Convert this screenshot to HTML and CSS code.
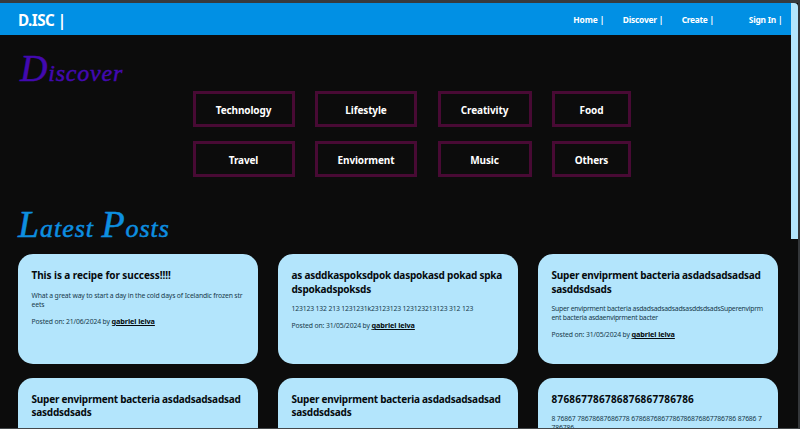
FILE: index.html
```html
<!DOCTYPE html>
<html lang="en">
<head>
<meta charset="utf-8">
<title>D.ISC</title>
<link rel="stylesheet" href="styles.css">
</head>
<body>
<div class="window">
  <div class="page">
    <header class="navbar">
      <a class="brand">D.ISC |</a>
      <nav class="links"><a class="home">Home |</a><a class="disc">Discover |</a><a class="create">Create |</a><a class="sign">Sign In |</a></nav>
    </header>
    <main>
      <h1 class="script discover"><span class="cap">D</span>iscover</h1>
      <section class="topics">
        <a>Technology</a><a>Lifestyle</a><a>Creativity</a><a>Food</a>
        <a>Travel</a><a>Enviorment</a><a>Music</a><a>Others</a>
      </section>
      <h1 class="script latest"><span class="cap">L</span>atest <span class="cap">P</span>osts</h1>
      <section class="posts">
        <article><h2 class="short">This is a recipe for success!!!!</h2><p>What a great way to start a day in the cold days of Icelandic frozen str<br>eets</p><p class="meta">Posted on: 21/06/2024 by <b>gabriel leiva</b></p></article>
        <article><h2>as asddkaspoksdpok daspokasd pokad spka<br>dspokadspoksds</h2><p>123123 132 213 1231231k23123123 123123213123 312 123</p><p class="meta">Posted on: 31/05/2024 by <b>gabriel leiva</b></p></article>
        <article><h2>Super enviprment bacteria asdadsadsadsad<br>sasddsdsads</h2><p class="dense">Super enviprment bacteria asdadsadsadsadsasddsdsadsSuperenviprm<br>ent bacteria asdaenviprment bacter</p><p class="meta">Posted on: 31/05/2024 by <b>gabriel leiva</b></p></article>
        <article><h2>Super enviprment bacteria asdadsadsadsad<br>sasddsdsads</h2></article>
        <article><h2>Super enviprment bacteria asdadsadsadsad<br>sasddsdsads</h2></article>
        <article><h2 class="number">876867786786876867786786</h2><p>8 76867 78678687686778 6786876867786786876867786786 87686 7<br>786786</p></article>
      </section>
    </main>
  </div>
  <div class="scrollbar"><div class="thumb"></div></div>
</div>
</body>
</html>
```
FILE: styles.css
```css
* { box-sizing: border-box; }
body { margin: 0; background: #0c0c0c; font-family: "Noto Sans", "Open Sans", sans-serif; color: #fff; overflow: hidden; }
.window { display: flex; height: 429px; border-top: 3px solid #373a3d; border-right: 2px solid #34373a; border-bottom: 1px solid #43474a; overflow: hidden; }
.page { width: 791px; flex: none; overflow: hidden; }
.scrollbar { width: 7px; flex: none; background: #0c0c0c; }
.thumb { height: 236px; background: #b3e5fc; border-top-right-radius: 4px; }
.navbar { height: 32px; background: #0190e4; display: flex; align-items: center; justify-content: space-between; padding: 1px 8.5px 0 18px; font-weight: 700; white-space: nowrap; }
.brand { font-size: 15.2px; letter-spacing: -0.5px; }
.links { display: flex; font-size: 8.4px; letter-spacing: -0.2px; }
.home { letter-spacing: -0.1px; }
.disc { margin-left: 18.5px; }
.create { margin-left: 18.5px; letter-spacing: -0.3px; }
.sign { margin-left: 35px; }
.script { margin: 0; font-family: "Liberation Serif", serif; font-style: italic; font-weight: 400; white-space: nowrap; line-height: 40px; -webkit-text-stroke: 0.5px currentColor; }
.cap { font-size: 38px; }
.discover { color: #4309b0; height: 56px; padding: 13px 0 0 20px; font-size: 24px; letter-spacing: 0.8px; }
.latest { color: #0d8fe0; height: 77px; padding: 27px 0 0 18px; font-size: 26px; letter-spacing: 0.95px; }
.topics { display: grid; grid-template-columns: 102px 102px 94px 79px; grid-auto-rows: 36px; gap: 14px 20.5px; padding-left: 192.5px; }
.topics a { border: 3px solid #480a34; display: flex; align-items: center; justify-content: center; font-size: 10px; letter-spacing: -0.12px; padding-top: 2px; font-weight: 700; }
.posts { display: grid; grid-template-columns: repeat(3, 240.5px); grid-auto-rows: 110px; gap: 13.5px 19.5px; padding-left: 17.5px; }
article { background: #b3e5fc; border-radius: 15px; padding: 15.4px 0 0 14px; color: #17394a; white-space: nowrap; overflow: hidden; }
h2 { margin: 0 0 7.6px; font-size: 10px; line-height: 13.6px; color: #050a0d; letter-spacing: -0.22px; }
.short { letter-spacing: -0.08px; }
.number { letter-spacing: 0.22px; }
p { margin: 0 0 8px; font-size: 6.8px; line-height: 9px; letter-spacing: -0.145px; }
.dense { letter-spacing: -0.23px; }
.meta { letter-spacing: -0.11px; }
.meta b { font-size: 7.3px; color: #050a0d; text-decoration: underline; }
```
